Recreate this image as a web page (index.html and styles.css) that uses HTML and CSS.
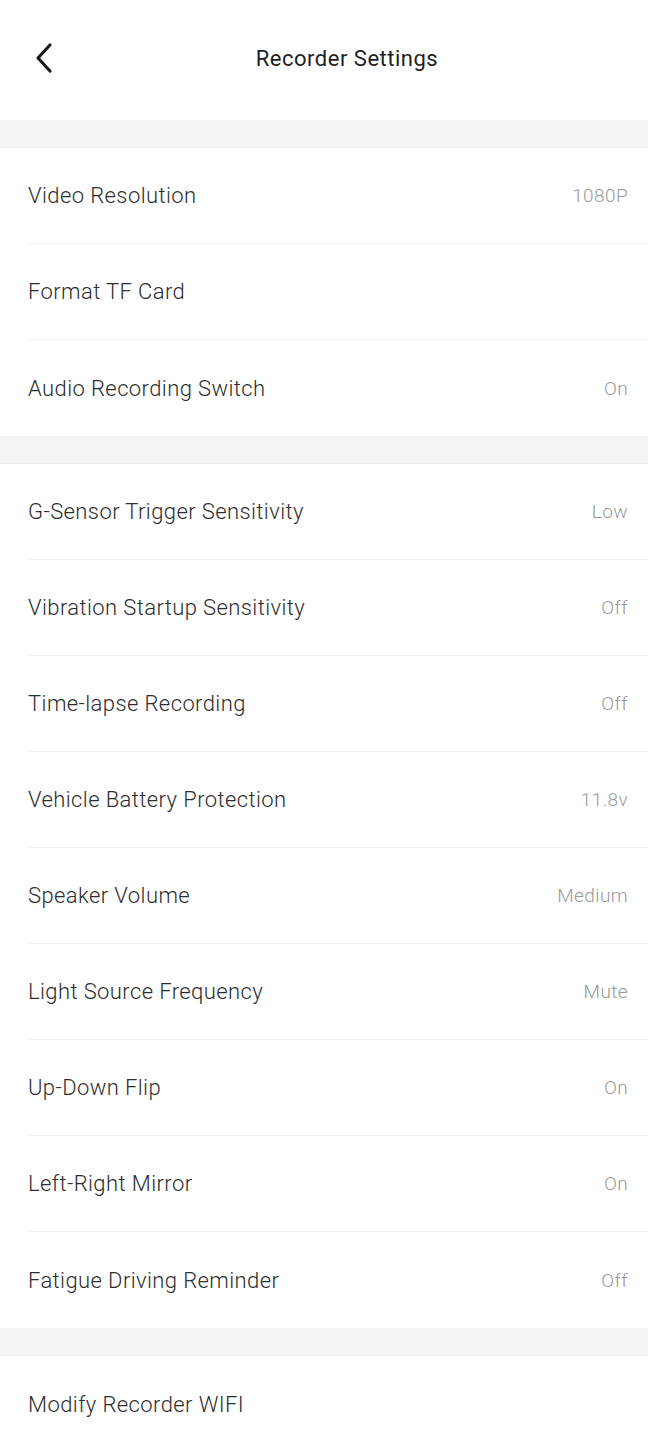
FILE: index.html
```html
<!DOCTYPE html>
<html lang="en">
<head>
    <meta charset="UTF-8">
    <meta name="viewport" content="width=device-width, initial-scale=1.0">
    <title>Recorder Settings</title>
    <link rel="stylesheet" href="styles.css">
</head>
<body>
    <header class="top-bar">
        <button class="back-btn" aria-label="Back">
            <svg width="20" height="32" viewBox="0 0 20 32">
                <path d="M16 3 L4 16 L16 29" fill="none" stroke="#1a1a1a" stroke-width="3.2" stroke-linecap="round" stroke-linejoin="round"/>
            </svg>
        </button>
        <h1 class="title">Recorder Settings</h1>
    </header>

    <div class="gap"></div>
    <ul class="group">
        <li class="row"><span class="label">Video Resolution</span><span class="value">1080P</span></li>
        <li class="row"><span class="label">Format TF Card</span><span class="value"></span></li>
        <li class="row"><span class="label">Audio Recording Switch</span><span class="value">On</span></li>
    </ul>

    <div class="gap"></div>
    <ul class="group">
        <li class="row"><span class="label">G-Sensor Trigger Sensitivity</span><span class="value">Low</span></li>
        <li class="row"><span class="label">Vibration Startup Sensitivity</span><span class="value">Off</span></li>
        <li class="row"><span class="label">Time-lapse Recording</span><span class="value">Off</span></li>
        <li class="row"><span class="label">Vehicle Battery Protection</span><span class="value">11.8v</span></li>
        <li class="row"><span class="label">Speaker Volume</span><span class="value">Medium</span></li>
        <li class="row"><span class="label">Light Source Frequency</span><span class="value">Mute</span></li>
        <li class="row"><span class="label">Up-Down Flip</span><span class="value">On</span></li>
        <li class="row"><span class="label">Left-Right Mirror</span><span class="value">On</span></li>
        <li class="row"><span class="label">Fatigue Driving Reminder</span><span class="value">Off</span></li>
    </ul>

    <div class="gap"></div>
    <ul class="group">
        <li class="row"><span class="label">Modify Recorder WIFI</span><span class="value"></span></li>
    </ul>
</body>
</html>
```

FILE: styles.css
```css
*{
    margin: 0;
    padding: 0;
    box-sizing: border-box;
}
body{
    background-color: #fff;
    font-family: Roboto, "Liberation Sans", sans-serif;
    font-weight: 300;
    color: #2b2b2b;
}
.top-bar{
    height: 120px;
    display: flex;
    align-items: center;
    padding-left: 34px;
}
.back-btn{
    border: none;
    background: none;
    width: 20px;
    height: 32px;
    margin-top: -5px;
}
.title{
    flex: 1;
    text-align: center;
    font-size: 22px;
    font-weight: 400;
    letter-spacing: 0.5px;
    color: #1f1f1f;
    padding-right: 8px;
    margin-top: -4px;
}
.gap{
    height: 28px;
    background-color: #f3f4f5;
    border-bottom: 1px solid #ececec;
}
.group{
    list-style: none;
    padding-left: 28px;
}
.row{
    height: 96px;
    display: flex;
    align-items: center;
    justify-content: space-between;
    padding-right: 20px;
    border-bottom: 1px solid #efefef;
}
.row:last-child{
    border-bottom: none;
}
.label{
    font-size: 22px;
    letter-spacing: 0.4px;
    color: #2e2e2e;
}
.value{
    font-size: 19px;
    letter-spacing: 0.4px;
    color: #999;
}
```
